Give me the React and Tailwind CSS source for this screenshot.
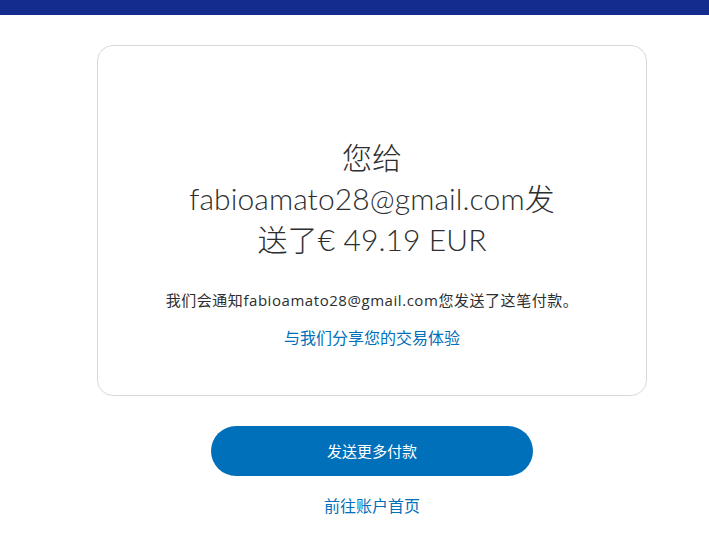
export default function App() {
  return (
    <div className="min-h-screen bg-white font-['Noto_Sans','Noto_Sans_CJK_SC',sans-serif] text-[#2c2e2f]">
      <div className="h-[15px] bg-[#142c8e]" />
      <main className="flex flex-col items-center pl-[35px] pt-[30px]">
        <section className="flex w-[550px] flex-col items-center rounded-2xl border border-[#d9d9d2] px-6 pb-[45px] pt-[91px] text-center">
          <h1 className="font-['Lato','Noto_Sans_CJK_SC',sans-serif] text-[30px] font-light leading-[41px] tracking-[0.1px]">
            您给
            <br />
            fabioamato28@gmail.com发
            <br />
            送了€ 49.19 EUR
          </h1>
          <p className="mt-[30px] font-['Open_Sans','Noto_Sans_CJK_SC',sans-serif] text-[15px] leading-5 tracking-[0.55px]">
            我们会通知fabioamato28@gmail.com您发送了这笔付款。
          </p>
          <a href="#" className="mt-4 text-[16px] leading-6 text-[#0070ba]">
            与我们分享您的交易体验
          </a>
        </section>
        <button
          type="button"
          className="mt-[30px] h-[50px] w-[322px] rounded-full bg-[#0070ba] text-[15px] text-white"
        >
          发送更多付款
        </button>
        <a href="#" className="mt-[18px] text-[16px] leading-6 text-[#0070ba]">
          前往账户首页
        </a>
      </main>
    </div>
  );
}
